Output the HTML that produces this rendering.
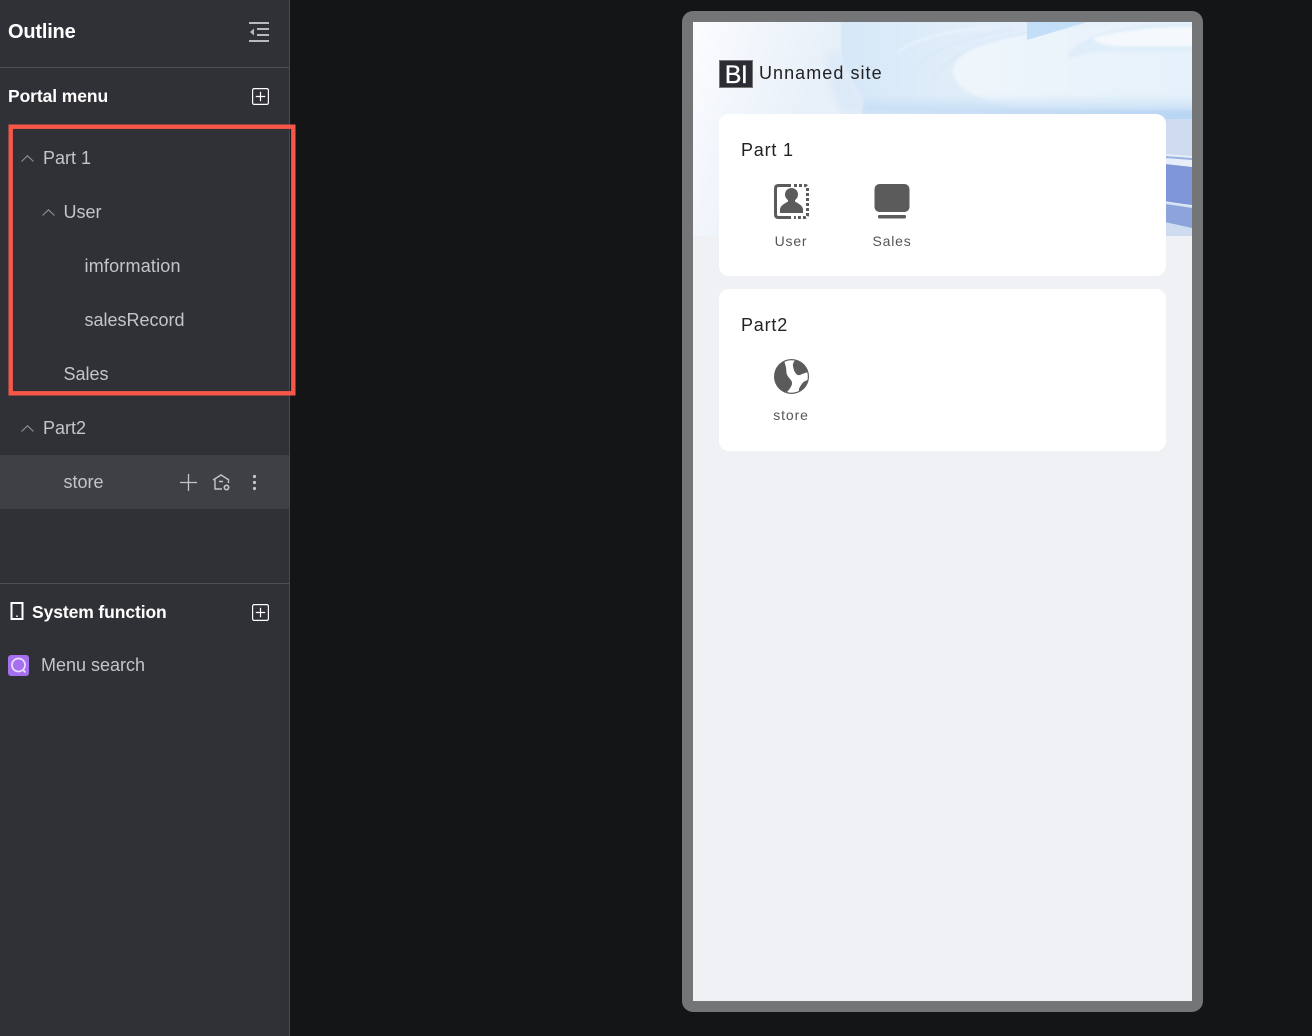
<!DOCTYPE html>
<html lang="en">
<head>
<meta charset="utf-8">
<title>Outline</title>
<style>
html,body{margin:0;padding:0;width:1312px;height:1036px;overflow:hidden;background:#141517;font-family:"Liberation Sans",sans-serif}
.a{position:absolute;white-space:nowrap}
svg{position:absolute;overflow:visible}
#side{position:absolute;left:0;top:0;width:289px;height:1036px;background:#303136;border-right:1px solid #4a4b50}
.hr{position:absolute;left:0;width:289px;height:1px;background:#505156}
.t{position:absolute;white-space:nowrap;font-size:18px;line-height:22px;color:#c4c5c8}
.h{position:absolute;white-space:nowrap;font-size:17.5px;line-height:22px;font-weight:700;color:#fff;letter-spacing:-.1px}
.c{position:absolute;white-space:nowrap;font-size:18px;line-height:22px;color:#222;letter-spacing:.8px}
.l{position:absolute;white-space:nowrap;font-size:14px;line-height:18px;color:#555;letter-spacing:.8px;text-align:center;width:80px}
.card{position:absolute;left:719px;width:447px;background:#fff;border-radius:10px}
</style>
</head>
<body>
<div id="side">
  <div class="a" style="left:8px;top:20px;font-size:20px;line-height:25px;font-weight:700;color:#fff;letter-spacing:-.2px">Outline</div>
  <svg style="left:248px;top:21px" width="22" height="22" viewBox="0 0 22 22" fill="none" stroke="#b9babd" stroke-width="2">
    <path d="M1 2H21M9 8H21M9 14H21M1 20H21"/><path d="M6 7.5V14.5L2 11Z" fill="#b9babd" stroke="none"/>
  </svg>
  <div class="hr" style="top:67px"></div>
  <div class="h" style="left:8px;top:85px">Portal menu</div>
  <svg style="left:252px;top:88px" width="17" height="17" viewBox="0 0 17 17" fill="none" stroke="#fff" stroke-width="1.2">
    <rect x=".6" y=".6" width="15.8" height="15.8" rx="1.5"/><path d="M3.8 8.5H13.2M8.5 3.8V13.2"/>
  </svg>

  <svg style="left:21px;top:155px" width="13" height="7" viewBox="0 0 13 7" fill="none" stroke="#8e8f93" stroke-width="1.1"><path d="M.5 6.500L6.500 .8L12.500 6.500"/></svg>
  <div class="t" style="left:43px;top:147px">Part 1</div>
  <svg style="left:42px;top:209px" width="13" height="7" viewBox="0 0 13 7" fill="none" stroke="#8e8f93" stroke-width="1.1"><path d="M.5 6.500L6.500 .8L12.500 6.500"/></svg>
  <div class="t" style="left:63.500px;top:201px">User</div>
  <div class="t" style="left:84.500px;top:255px;letter-spacing:.2px">imformation</div>
  <div class="t" style="left:84.500px;top:309px">salesRecord</div>
  <div class="t" style="left:63.500px;top:363px">Sales</div>
  <svg style="left:21px;top:425px" width="13" height="7" viewBox="0 0 13 7" fill="none" stroke="#8e8f93" stroke-width="1.1"><path d="M.5 6.500L6.500 .8L12.500 6.500"/></svg>
  <div class="t" style="left:43px;top:417px">Part2</div>

  <div class="a" style="left:0;top:455px;width:289px;height:54px;background:#3f4045"></div>
  <div class="t" style="left:63.500px;top:471px">store</div>
  <svg style="left:180px;top:474px" width="17" height="17" viewBox="0 0 17 17" fill="none" stroke="#c4c5c8" stroke-width="1.3"><path d="M0 8.500H17M8.500 0V17"/></svg>
  <svg style="left:212px;top:474px" width="19" height="17" viewBox="0 0 19 17" fill="none" stroke="#c4c5c8" stroke-width="1.400">
    <path d="M1 6L9 1L17 6M3 5.500V15H10M7 7.500H11M16.500 6.500V9"/><circle cx="14.500" cy="13.500" r="2.200" stroke-width="1.600"/>
  </svg>
  <svg style="left:252px;top:474px" width="5" height="17" viewBox="0 0 5 17" fill="#c4c5c8"><circle cx="2.500" cy="2.500" r="1.600"/><circle cx="2.500" cy="8.500" r="1.600"/><circle cx="2.500" cy="14.500" r="1.600"/></svg>

  <div class="hr" style="top:583px"></div>
  <svg style="left:10px;top:602px" width="14" height="18" viewBox="0 0 14 18" fill="none" stroke="#fff" stroke-width="2"><rect x="1.500" y="1" width="11" height="16"/><path d="M7 13.500V15" stroke-width="1.500"/></svg>
  <div class="h" style="left:32px;top:601px">System function</div>
  <svg style="left:252px;top:604px" width="17" height="17" viewBox="0 0 17 17" fill="none" stroke="#fff" stroke-width="1.200">
    <rect x=".6" y=".6" width="15.800" height="15.800" rx="1.500"/><path d="M3.800 8.500H13.200M8.500 3.800V13.200"/>
  </svg>
  <svg style="left:8px;top:655px" width="21" height="21" viewBox="0 0 21 21" fill="none">
    <rect width="21" height="21" rx="3" fill="#a56ff0"/><circle cx="10.500" cy="10" r="6.500" stroke="#eadcff" stroke-width="1.800"/><path d="M15 14.800L17.500 17.500" stroke="#eadcff" stroke-width="1.800"/>
  </svg>
  <div class="t" style="left:41px;top:654px">Menu search</div>
</div>

<svg style="left:8px;top:124px" width="288" height="272" viewBox="0 0 288 272" fill="none"><rect x="2.700" y="2.700" width="282.600" height="266.600" stroke="#f9564a" stroke-width="4.400"/></svg>

<div class="a" style="left:682px;top:11px;width:521px;height:1001px;background:#747577;border-radius:11px"></div>
<div class="a" style="left:693px;top:22px;width:499px;height:979px;background:#f0f1f5;overflow:hidden">
  <svg style="left:0;top:0" width="499" height="214" viewBox="0 0 499 214">
    <defs>
      <clipPath id="hc"><rect width="499" height="214"/></clipPath>
      <linearGradient id="g0" gradientUnits="userSpaceOnUse" x1="0" y1="10" x2="125" y2="50"><stop offset="0" stop-color="#fbfcfe"/><stop offset="1" stop-color="#e8f0f9"/></linearGradient>
      <linearGradient id="g1" x1="0" y1="0" x2="1" y2="0"><stop offset="0" stop-color="#d6e7f8"/><stop offset=".3" stop-color="#e0edf9"/><stop offset="1" stop-color="#eaf3fb"/></linearGradient>
      <linearGradient id="g2" x1="0" y1="0" x2="0" y2="1"><stop offset="0" stop-color="#c6def6" stop-opacity="0"/><stop offset="1" stop-color="#c2dbf5"/></linearGradient>
      <linearGradient id="g3" x1="0" y1="0" x2="1" y2="0"><stop offset="0" stop-color="#eff5fb"/><stop offset=".6" stop-color="#e9f3fb"/><stop offset="1" stop-color="#e6f1fb"/></linearGradient>
      <linearGradient id="g4" x1="0" y1="0" x2="1" y2="0"><stop offset="0" stop-color="#d2e3f6"/><stop offset="1" stop-color="#bad6f3"/></linearGradient>
      <filter id="b"><feGaussianBlur stdDeviation="1.200"/></filter>
      <filter id="b2"><feGaussianBlur stdDeviation="4"/></filter>
    </defs>
    <g clip-path="url(#hc)">
    <rect width="499" height="214" fill="url(#g0)"/>
    <path d="M134 30C135 55 140 75 150 92H180C165 70 150 50 147 30Z" fill="#dce9f7" filter="url(#b2)"/>
    <path d="M148 -5H505V92H177C165 68 150 50 148 30Z" fill="url(#g1)" filter="url(#b)"/>
    <path d="M205 30C225 15 260 8 300 5" fill="none" stroke="#eef5fb" stroke-width="1.500" filter="url(#b)"/>
    <path d="M222 48C240 25 275 14 320 8" fill="none" stroke="#d5e5f6" stroke-width="1" filter="url(#b)"/>
    <path d="M240 58C258 30 290 18 340 10" fill="none" stroke="#d5e5f6" stroke-width="1" filter="url(#b)"/>
    <path d="M262 42C272 22 320 12 405 4H505V90H345C285 82 252 62 262 42Z" fill="url(#g3)" filter="url(#b)"/>
    <path d="M374 33C385 15 420 5 465 0H505V30H410C395 30 385 34 376 37Z" fill="#e0eefa" filter="url(#b)"/>
    <path d="M400 16C430 8 465 5 505 5V24H430C415 24 405 22 400 16Z" fill="#f5f9fd" filter="url(#b)"/>
    <path d="M334 0H394L334 18Z" fill="#c2dff7"/>
    <path d="M170 72H505V92H170Z" fill="url(#g2)" filter="url(#b)"/>
    <rect x="170" y="88" width="335" height="9" fill="url(#g4)" filter="url(#b)"/>
    <rect x="472" y="94" width="27" height="120" fill="#cfdcf0"/>
    <rect x="472" y="92" width="27" height="5" fill="#b9d6f2"/>
    <path d="M472 132L499 134V150L472 147Z" fill="#e6eefa"/>
    <path d="M472 142L499 145V183L472 180Z" fill="#7e95d8"/>
    <path d="M472 135L499 137" stroke="#7e95d8" stroke-width="2" opacity=".7"/>
    <path d="M472 180L499 184" stroke="#e0e9f8" stroke-width="1.600"/>
    <path d="M472 182L499 186V206L472 200Z" fill="#8da3dc"/>
    </g>
  </svg>

  <div class="a" style="left:26px;top:38px;width:34px;height:28px;background:#2a2d33;border:.5px solid #777;box-sizing:border-box;color:#fff;font-size:25px;line-height:28px;text-align:center;font-weight:400;letter-spacing:-.5px;-webkit-text-stroke:.3px #fff;overflow:hidden">BI</div>
</div>
<div class="c" style="left:759px;top:62px;letter-spacing:1.050px">Unnamed site</div>

<div class="card" style="top:114px;height:162px"></div>
<div class="card" style="top:289px;height:162px"></div>

<div class="c" style="left:741px;top:139px">Part 1</div>
<svg style="left:774px;top:184px" width="35" height="35" viewBox="0 0 35 35" fill="none" stroke="#5b5b5b">
  <path d="M17 1.500H4.500Q1.500 1.500 1.500 4.500V30.500Q1.500 33.500 4.500 33.500H17" stroke-width="3"/>
  <path d="M20 1.500H31Q33.500 1.500 33.500 4V31Q33.500 33.500 31 33.500H20" stroke-width="3" stroke-dasharray="3 2"/>
  <circle cx="17.500" cy="10.500" r="6.500" fill="#5b5b5b" stroke="none"/>
  <path d="M6 29V25.500C6 21.500 11 19.500 14 17.500V14H21V17.500C24 19.500 29 21.500 29 25.500V29Z" fill="#5b5b5b" stroke="none"/>
</svg>
<div class="l" style="left:751px;top:232px">User</div>
<svg style="left:874px;top:184px" width="36" height="35" viewBox="0 0 36 35" fill="#5b5b5b">
  <rect x=".5" y="0" width="35" height="28" rx="5"/><rect x="4" y="31" width="28" height="3.500" rx="1.500"/>
</svg>
<div class="l" style="left:852px;top:232px">Sales</div>

<div class="c" style="left:741px;top:314px">Part2</div>
<svg style="left:774px;top:359px" width="35" height="35" viewBox="0 0 35 35">
  <defs><clipPath id="gc"><circle cx="17.500" cy="17.500" r="16.300"/></clipPath></defs>
  <circle cx="17.500" cy="17.500" r="17.500" fill="#5b5b5b"/>
  <path clip-path="url(#gc)" d="M10 1C13 0 18 -1 22 0C19.500 3 18.500 5 19 7C19.500 10 20 12 21.500 14C23 16 24 16.500 26 16C28.500 15 32 13.500 36 12.500V21C33 21 30.500 22 29 23.500C27 26 25.500 28 25 30C25 32 25 34 26 36H11C13 32.500 15.500 30.500 16.500 28.500C18 26 18.500 24 17.500 22C16 19.500 13.500 17.500 12.800 15C12 12 12.500 9 11.500 6.500C11 4.500 10.500 3 10 1Z" fill="#fff"/>
</svg>
<div class="l" style="left:751px;top:406px;letter-spacing:.9px">store</div>
</body>
</html>
